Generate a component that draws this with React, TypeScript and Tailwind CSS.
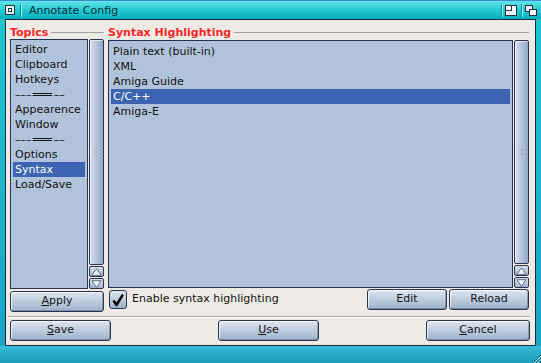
import React from "react";

const FONT = { fontFamily: '"DejaVu Sans", Verdana, sans-serif' };

function Btn({ children, className = "" }: { children: React.ReactNode; className?: string }) {
  return (
    <div
      className={
        "flex items-center justify-center h-[21px] rounded-[3px] border border-[#2c3450] bg-gradient-to-b from-[#dde6f0] to-[#9db2cb] shadow-[inset_1px_1px_0_rgba(255,255,255,0.75),inset_-1px_-1px_0_rgba(50,70,100,0.35)] text-[11px] text-[#151515] " +
        className
      }
    >
      {children}
    </div>
  );
}

function Grip() {
  const dots = [];
  for (let r = 0; r < 3; r++)
    for (let c = 0; c < 2; c++)
      dots.push(<rect key={r + "-" + c} x={c * 4} y={r * 4} width="2" height="2" fill="#eef3f9" stroke="#7f93ae" strokeWidth="0.5" />);
  return (
    <svg width="6" height="10" viewBox="0 0 6 10">
      {dots}
    </svg>
  );
}

function Arrow({ up }: { up?: boolean }) {
  return (
    <div className="h-[11px] rounded-[2px] border border-[#2c3450] bg-gradient-to-b from-[#d6e0ec] to-[#9fb4cd] flex items-center justify-center">
      <svg width="11" height="8" viewBox="0 0 11 8">
        {up ? (
          <polygon points="5.5,0.7 10,7.3 1,7.3" fill="#f4f7fb" stroke="#5e6f88" strokeWidth="1" />
        ) : (
          <polygon points="5.5,7.3 10,0.7 1,0.7" fill="#f4f7fb" stroke="#5e6f88" strokeWidth="1" />
        )}
      </svg>
    </div>
  );
}

function ScrollBar() {
  return (
    <div className="w-[15px] flex flex-col gap-[1px]">
      <div className="flex-1 rounded-[2px] border border-[#2c3450] bg-gradient-to-r from-[#d4e0ed] via-[#b3c5db] to-[#8fa6c4] flex items-center justify-center shadow-[inset_1px_1px_0_rgba(255,255,255,0.6)]">
        <Grip />
      </div>
      <Arrow up />
      <Arrow />
    </div>
  );
}

function Header({ label }: { label: string }) {
  return (
    <div className="h-[14px] flex items-center gap-[3px]">
      <span className="text-[11px] font-bold text-[#ff2626] leading-none">{label}</span>
      <div className="flex-1 h-px bg-[#a4a19d]" />
    </div>
  );
}

function Sep() {
  return (
    <span className="text-[#111]">
      –––<span className="tracking-[-3px]">===</span> ––
    </span>
  );
}

export default function App() {
  const topics: React.ReactNode[] = [
    "Editor",
    "Clipboard",
    "Hotkeys",
    <Sep key="s1" />,
    "Appearence",
    "Window",
    <Sep key="s2" />,
    "Options",
    "Syntax",
    "Load/Save",
  ];
  const syntax = ["Plain text (built-in)", "XML", "Amiga Guide", "C/C++", "Amiga-E"];

  return (
    <div
      className="w-[541px] h-[363px] flex flex-col overflow-hidden relative bg-gradient-to-b from-[#1ec7cf] to-[#1aa3c6]"
      style={FONT}
    >
      {/* title bar */}
      <div className="h-[19px] flex items-center border-t border-[#3b8fcf] bg-gradient-to-b from-[#5fe2e6] via-[#1fcad1] to-[#04afbd]">
        <div className="w-[5px]" />
        <div className="w-[10px] h-[10px] border border-[#1b3440] bg-[#e8f4f6] flex items-center justify-center">
          <div className="w-[4px] h-[4px] border border-[#1b3440] bg-white" />
        </div>
        <div className="ml-[5px] w-px h-[13px] bg-[#0a8a96]" />
        <div className="w-px h-[13px] bg-[#9af0f2]" />
        <span className="ml-[7px] text-[11px] text-[#0c2a36] leading-none">Annotate Config</span>
        <div className="flex-1" />
        <div className="w-px h-[13px] bg-[#0a8a96]" />
        <div className="w-px h-[13px] bg-[#9af0f2]" />
        <div className="ml-[2px] w-[12px] h-[11px] border border-[#1b3440] bg-[#eef6f8] relative">
          <div className="absolute left-0 top-0 w-[6px] h-[5px] border-r border-b border-[#1b3440] bg-white" />
        </div>
        <div className="ml-[4px] w-px h-[13px] bg-[#0a8a96]" />
        <div className="w-px h-[13px] bg-[#9af0f2]" />
        <div className="ml-[2px] w-[12px] h-[11px] relative">
          <div className="absolute left-0 top-0 w-[8px] h-[7px] border border-[#1b3440] bg-[#dfeef2]" />
          <div className="absolute right-0 bottom-0 w-[8px] h-[7px] border border-[#1b3440] bg-white" />
        </div>
        <div className="w-[4px]" />
      </div>

      {/* body */}
      <div className="flex flex-1 px-[5px]">
        <div className="flex-1 border border-[#1a2a40] bg-[#eeebe6] flex flex-col pl-[4px] pr-[6px] pt-[5px] pb-[4px]">
          <div className="flex gap-[4px] items-start">
            {/* left column */}
            <div className="w-[94px] flex flex-col">
              <Header label="Topics" />
              <div className="h-[250px] flex gap-[1px]">
                <div className="w-[78px] border border-[#2a3150] bg-[#b0c3db] px-[2px] pt-[2px] text-[11px] text-[#111]">
                  {topics.map((t, i) => (
                    <div
                      key={i}
                      className={
                        "h-[15px] px-[2px] pt-px flex items-center whitespace-nowrap " +
                        (i === 8 ? "bg-[#3d64b3] text-white" : "")
                      }
                    >
                      {t}
                    </div>
                  ))}
                </div>
                <ScrollBar />
              </div>
              <Btn className="mt-[2px] w-[94px]">
                <span>
                  <span className="underline">A</span>pply
                </span>
              </Btn>
            </div>

            {/* right column */}
            <div className="flex-1 flex flex-col">
              <Header label="Syntax Highlighting" />
              <div className="h-[249px] flex gap-[1px] pt-[1px]">
                <div className="flex-1 border border-[#2a3150] bg-[#b0c3db] px-[2px] pt-[3px] text-[11px] text-[#111]">
                  {syntax.map((t, i) => (
                    <div
                      key={i}
                      className={
                        "h-[15px] px-[2px] pt-px flex items-center whitespace-nowrap " +
                        (i === 3 ? "bg-[#3d64b3] text-white" : "")
                      }
                    >
                      {t}
                    </div>
                  ))}
                </div>
                <ScrollBar />
              </div>
              <div className="mt-[1px] h-[21px] flex items-center">
                <div className="ml-[1px] w-[18px] h-[19px] rounded-[3px] border border-[#2c3450] bg-gradient-to-b from-[#dde6f0] to-[#9db2cb] flex items-center justify-center">
                  <svg width="14" height="14" viewBox="0 0 14 14">
                    <path d="M2.5 7.5 L5.5 12 L12 1.5" fill="none" stroke="#000" strokeWidth="2.4" strokeLinejoin="round" />
                  </svg>
                </div>
                <span className="ml-[5px] text-[11px] text-[#111]">Enable syntax highlighting</span>
                <div className="flex-1" />
                <Btn className="w-[80px]">Edit</Btn>
                <Btn className="ml-[2px] w-[80px]">Reload</Btn>
              </div>
            </div>
          </div>

          {/* separator */}
          <div className="mt-[4px] -ml-[2px] -mr-[1px] h-px bg-[#aaa6a2]" />
          <div className="-ml-[2px] -mr-[1px] h-px bg-white" />

          {/* bottom buttons */}
          <div className="mt-[2px] flex justify-between">
            <Btn className="w-[101px]">
              <span>
                <span className="underline">S</span>ave
              </span>
            </Btn>
            <Btn className="w-[101px]">
              <span>
                <span className="underline">U</span>se
              </span>
            </Btn>
            <Btn className="w-[104px] -mr-[1px]">
              <span>
                <span className="underline">C</span>ancel
              </span>
            </Btn>
          </div>
        </div>
      </div>

      {/* bottom frame */}
      <div className="h-[17px] bg-gradient-to-b from-[#38bcd6] to-[#1a9cbc]" />

      {/* resize grip */}
      <svg className="absolute right-0 bottom-0" width="10" height="10" viewBox="0 0 10 10">
        <path d="M10 2 L2 10 M10 5 L5 10 M10 8 L8 10" stroke="#0d5a6e" strokeWidth="1" />
        <path d="M10 3 L3 10 M10 6 L6 10" stroke="#bff0f6" strokeWidth="1" />
      </svg>
    </div>
  );
}
